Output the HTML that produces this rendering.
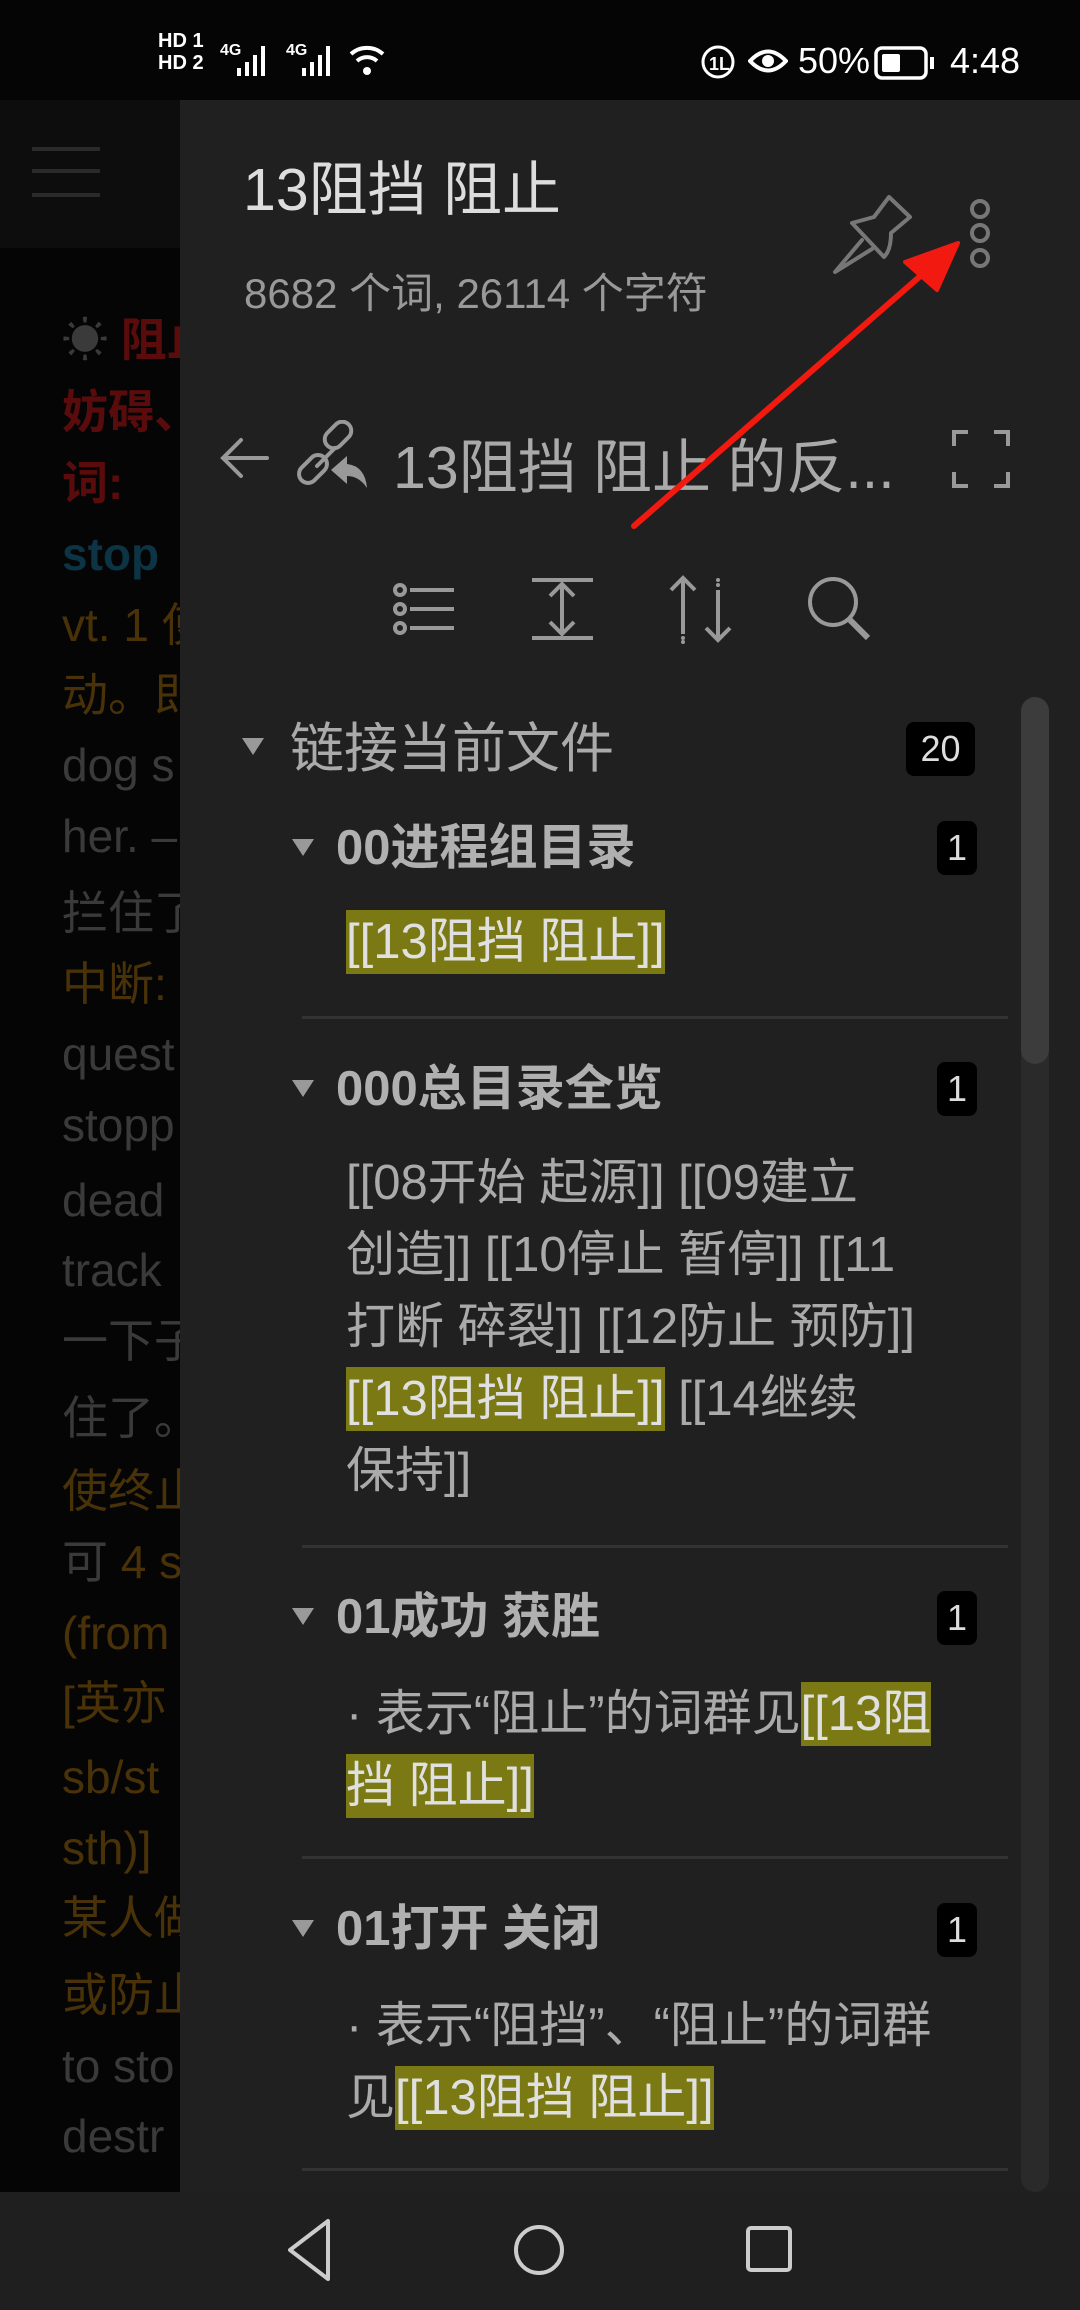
<!DOCTYPE html>
<html><head><meta charset="utf-8"><style>
*{margin:0;padding:0;box-sizing:border-box}
body{width:1080px;height:2310px;background:#050505;position:relative;overflow:hidden;font-family:"Liberation Sans","Noto Sans CJK SC",sans-serif}
.a{position:absolute;white-space:nowrap}
#left{position:absolute;left:0;top:248px;width:180px;height:1944px;overflow:hidden}
#left div{position:absolute;left:62px;font-size:46px;line-height:50px;white-space:nowrap}
.r{color:#5a0c0c;font-weight:bold}.t{color:#0c3444;font-weight:bold}.b{color:#4a3208}.g{color:#3a3a3a}
#panel{position:absolute;left:180px;top:100px;width:900px;height:2092px;background:#202020}
.hl{background:#7a7914;color:#e0e0e0;padding:5px 0}
.h{font-size:49px;font-weight:bold;color:#b0b0b0}
.tri{position:absolute;width:0;height:0;border-left:11px solid transparent;border-right:11px solid transparent;border-top:17px solid #999}
.badge{position:absolute;background:#000;color:#ddd;border-radius:8px;font-size:36px;text-align:center}
.div{position:absolute;left:302px;width:706px;height:3px;background:#333}
.body{position:absolute;left:346px;font-size:49px;color:#aaa;line-height:72px;width:680px}
</style></head><body>
<!-- status bar -->
<div class="a" style="left:158px;top:30px;color:#fff;font-size:20px;font-weight:bold;line-height:22px">HD 1<br>HD 2</div>
<div class="a" style="left:220px;top:42px;color:#fff;font-size:16px;font-weight:bold">4G</div>
<svg class="a" style="left:235px;top:42px" width="40" height="36"><g fill="#fff"><rect x="2" y="26" width="4" height="8"/><rect x="10" y="20" width="4" height="14"/><rect x="18" y="13" width="4" height="21"/><rect x="26" y="4" width="4" height="30"/></g></svg>
<div class="a" style="left:286px;top:42px;color:#fff;font-size:16px;font-weight:bold">4G</div>
<svg class="a" style="left:300px;top:42px" width="40" height="36"><g fill="#fff"><rect x="2" y="26" width="4" height="8"/><rect x="10" y="20" width="4" height="14"/><rect x="18" y="13" width="4" height="21"/><rect x="26" y="4" width="4" height="30"/></g></svg>
<svg class="a" style="left:348px;top:42px" width="40" height="36"><g fill="none" stroke="#fff" stroke-width="4"><path d="M3 12a24 24 0 0 1 32 0"/><path d="M9 19a15 15 0 0 1 20 0"/></g><circle cx="19" cy="29" r="4" fill="#fff"/></svg>
<svg class="a" style="left:700px;top:44px" width="36" height="36"><circle cx="18" cy="18" r="15" fill="none" stroke="#fff" stroke-width="3"/><text x="9" y="26" fill="#fff" font-size="18" font-weight="bold" font-family="Liberation Sans">1L</text></svg>
<svg class="a" style="left:748px;top:46px" width="40" height="30"><path d="M2 15Q20 -4 38 15Q20 34 2 15Z" fill="none" stroke="#fff" stroke-width="4"/><circle cx="20" cy="15" r="6" fill="#fff"/></svg>
<div class="a" style="left:798px;top:40px;color:#fff;font-size:36px">50%</div>
<svg class="a" style="left:874px;top:46px" width="62" height="34"><rect x="2" y="2" width="50" height="30" rx="6" fill="none" stroke="#fff" stroke-width="3.5"/><rect x="8" y="8" width="18" height="18" rx="2" fill="#fff"/><rect x="56" y="11" width="4" height="12" fill="#fff"/></svg>
<div class="a" style="left:950px;top:40px;color:#fff;font-size:36px">4:48</div>

<!-- left background -->
<div class="a" style="left:0;top:100px;width:180px;height:148px;background:#0d0d0d"></div>
<svg class="a" style="left:32px;top:145px" width="70" height="56"><g stroke="#2a2a2a" stroke-width="4"><line x1="0" y1="4" x2="68" y2="4"/><line x1="0" y1="26" x2="68" y2="26"/><line x1="0" y1="50" x2="68" y2="50"/></g></svg>
<div id="left">
<div style="top:67px"><span class="g">☀ </span><span class="r">阻止</span></div>
<div class="r" style="top:139px">妨碍、</div>
<div class="r" style="top:210px">词:</div>
<div class="t" style="top:281px">stop</div>
<div class="b" style="top:352px">vt. 1 使</div>
<div class="b" style="top:422px">动。即</div>
<div class="g" style="top:492px">dog s</div>
<div class="g" style="top:563px">her. –</div>
<div class="g" style="top:640px">拦住了</div>
<div class="b" style="top:711px">中断:</div>
<div class="g" style="top:781px">quest</div>
<div class="g" style="top:852px">stopp</div>
<div class="g" style="top:927px">dead</div>
<div class="g" style="top:997px">track</div>
<div class="g" style="top:1068px">一下子</div>
<div class="g" style="top:1145px">住了。</div>
<div class="b" style="top:1218px">使终止</div>
<div style="top:1289px"><span class="g">可 </span><span class="b">4 s</span></div>
<div class="b" style="top:1360px">(from</div>
<div class="b" style="top:1430px">[英亦</div>
<div class="b" style="top:1504px">sb/st</div>
<div class="b" style="top:1575px">sth)]</div>
<div class="b" style="top:1645px">某人做</div>
<div class="b" style="top:1722px">或防止</div>
<div class="g" style="top:1793px">to sto</div>
<div class="g" style="top:1863px">destr</div>
</div>

<div id="panel"></div>
<div class="a" style="left:243px;top:142px;font-size:59px;color:#ddd">13阻挡 阻止</div>
<div class="a" style="left:244px;top:260px;font-size:42px;color:#999">8682 个词, 26114 个字符</div>
<svg class="a" style="left:0;top:0" width="1080" height="300"><g fill="none" stroke="#777" stroke-width="4" stroke-linejoin="round" stroke-linecap="round"><path d="M852 223L874 217L889 197L910 217L891 233Q891 250 884 257Z"/><path d="M862 240L835 272L872 249"/><circle cx="980" cy="209" r="8"/><circle cx="980" cy="233" r="8"/><circle cx="980" cy="258" r="8"/></g></svg>

<svg class="a" style="left:215px;top:420px" width="160" height="80"><g fill="none" stroke="#999" stroke-width="4" stroke-linecap="round"><path d="M52 38H10M26 20L8 38L26 56"/><rect x="108" y="6" width="30" height="18" rx="9" transform="rotate(-45 123 15)"/><rect x="82" y="40" width="32" height="18" rx="9" transform="rotate(-45 98 49)"/><line x1="102" y1="46" x2="120" y2="28"/></g><path d="M116 50L132 36L132 44Q150 46 152 68Q144 56 132 56L132 64Z" fill="#999"/></svg>
<div class="a" style="left:393px;top:420px;font-size:59px;color:#aaa">13阻挡 阻止 的反...</div>
<svg class="a" style="left:952px;top:430px" width="60" height="60"><g fill="none" stroke="#999" stroke-width="4"><path d="M2 16V2H16M42 2H56V16M56 42V56H42M16 56H2V42"/></g></svg>

<svg class="a" style="left:380px;top:560px" width="520" height="100"><g fill="none" stroke="#999" stroke-width="4"><circle cx="20" cy="30" r="5"/><circle cx="20" cy="49" r="5"/><circle cx="20" cy="68" r="5"/><path d="M30 30H74M30 49H74M30 68H74"/><path d="M152 20H213M152 78H213M182 24V74M170 36L182 24L194 36M170 62L182 74L194 62"/><path d="M303 74V18M291 30L303 18L315 30M338 30V80M326 68L338 80L350 68"/><circle cx="453" cy="42" r="23"/><path d="M470 60L488 78" stroke-width="6"/></g><g fill="#999"><circle cx="338" cy="20" r="2"/><circle cx="338" cy="25" r="2"/><circle cx="303" cy="78" r="2"/><circle cx="303" cy="82" r="2"/></g></svg>

<!-- scrollbar -->
<div class="a" style="left:1021px;top:697px;width:28px;height:1495px;background:#2a2a2a;border-radius:14px"></div>
<div class="a" style="left:1021px;top:697px;width:28px;height:367px;background:#3c3c3c;border-radius:14px"></div>

<div class="tri" style="left:242px;top:738px"></div>
<div class="a" style="left:290px;top:704px;font-size:54px;color:#aaa">链接当前文件</div>
<div class="badge" style="left:906px;top:722px;width:69px;height:54px;line-height:54px">20</div>

<div class="tri" style="left:292px;top:839px"></div>
<div class="a h" style="left:336px;top:808px">00进程组目录</div>
<div class="badge" style="left:937px;top:821px;width:40px;height:54px;line-height:54px">1</div>
<div class="a" style="left:346px;top:913px;font-size:49px;line-height:59px;color:#ddd"><span class="hl">[[13阻挡 阻止]]</span></div>
<div class="div" style="top:1016px"></div>

<div class="tri" style="left:292px;top:1080px"></div>
<div class="a h" style="left:336px;top:1049px">000总目录全览</div>
<div class="badge" style="left:937px;top:1062px;width:40px;height:54px;line-height:54px">1</div>
<div class="body" style="top:1147px">[[08开始 起源]] [[09建立<br>创造]] [[10停止 暂停]] [[11<br>打断 碎裂]] [[12防止 预防]]<br><span class="hl">[[13阻挡 阻止]]</span> [[14继续<br>保持]]</div>
<div class="div" style="top:1545px"></div>

<div class="tri" style="left:292px;top:1608px"></div>
<div class="a h" style="left:336px;top:1577px">01成功 获胜</div>
<div class="badge" style="left:937px;top:1591px;width:40px;height:54px;line-height:54px">1</div>
<div class="body" style="top:1678px">· 表示“阻止”的词群见<span class="hl">[[13阻<br>挡 阻止]]</span></div>
<div class="div" style="top:1856px"></div>

<div class="tri" style="left:292px;top:1920px"></div>
<div class="a h" style="left:336px;top:1889px">01打开 关闭</div>
<div class="badge" style="left:937px;top:1903px;width:40px;height:54px;line-height:54px">1</div>
<div class="body" style="top:1990px">· 表示“阻挡”、“阻止”的词群<br>见<span class="hl">[[13阻挡 阻止]]</span></div>
<div class="div" style="top:2168px"></div>

<!-- red arrow -->
<svg class="a" style="left:0;top:0" width="1080" height="600"><path d="M634 526L925 272" stroke="#f21a10" stroke-width="6" stroke-linecap="round"/><path d="M958 243L905 262L937 290Z" fill="#f21a10" stroke="#f21a10" stroke-width="4" stroke-linejoin="round"/></svg>

<!-- nav bar -->
<div class="a" style="left:0;top:2192px;width:1080px;height:118px;background:#1f1f1f"></div>
<svg class="a" style="left:280px;top:2215px" width="540" height="70"><g fill="none" stroke="#ccc" stroke-width="4" stroke-linejoin="round"><path d="M48 6V64L10 35Z"/><circle cx="259" cy="35" r="23"/><rect x="468" y="13" width="42" height="42" rx="3"/></g></svg>
</body></html>
